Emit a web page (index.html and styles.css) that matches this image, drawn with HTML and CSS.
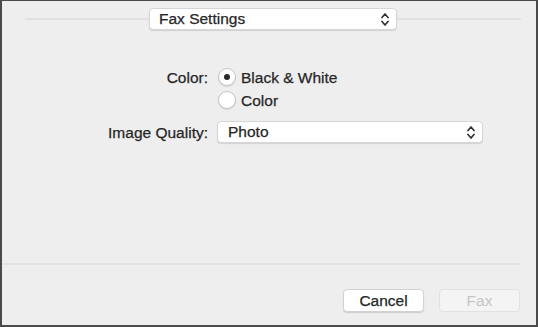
FILE: index.html
```html
<!doctype html>
<html lang="en">
  <head>
    <meta charset="UTF-8" />
    <meta name="viewport" content="width=device-width, initial-scale=1.0" />
    <title>Fax Settings</title>
    <link rel="stylesheet" href="styles.css">
  </head>
  <body>
    <div class="window">
      <!-- Panel picker -->
      <div class="top">
        <div class="rule"></div>
        <div class="popup panel-popup">
          <span>Fax Settings</span>
          <svg class="chevrons" width="8" height="15" viewBox="0 0 8 15">
            <path d="M1 5.5 L4 2 L7 5.5 M1 9.5 L4 13 L7 9.5" fill="none" stroke="#333" stroke-width="1.7" stroke-linecap="round" stroke-linejoin="round" />
          </svg>
        </div>
        <div class="rule"></div>
      </div>

      <!-- Options -->
      <div class="form">
        <div class="label">Color:</div>
        <label class="radio-row">
          <span class="radio checked"></span>
          <span>Black &amp; White</span>
        </label>

        <div class="label"></div>
        <label class="radio-row">
          <span class="radio"></span>
          <span>Color</span>
        </label>

        <div class="label quality">Image Quality:</div>
        <div class="popup quality-popup">
          <span>Photo</span>
          <svg class="chevrons" width="8" height="15" viewBox="0 0 8 15">
            <path d="M1 5.5 L4 2 L7 5.5 M1 9.5 L4 13 L7 9.5" fill="none" stroke="#333" stroke-width="1.7" stroke-linecap="round" stroke-linejoin="round" />
          </svg>
        </div>
      </div>

      <div class="spacer"></div>

      <!-- Footer -->
      <div class="bottom-rule"></div>
      <div class="footer">
        <button class="btn">Cancel</button>
        <button class="btn disabled">Fax</button>
      </div>
    </div>
  </body>
</html>
```

FILE: styles.css
```css
* {
  margin: 0;
  padding: 0;
  box-sizing: border-box;
}

body {
  font-family: "Liberation Sans", Arial, sans-serif;
  font-size: 15.5px;
  color: #262626;
  -webkit-text-stroke: 0.25px currentColor;
  background: #4a4a4a;
}

.window {
  width: 538px;
  height: 327px;
  border: 2px solid #4a4a4a;
  border-top-width: 1.5px;
  background: #eeeeee;
  display: flex;
  flex-direction: column;
}

.top {
  display: flex;
  align-items: center;
  padding: 7px 15px 0 23px;
}

.rule {
  flex: 1;
  height: 2px;
  background: #e0e0e0;
}

.popup {
  display: flex;
  align-items: center;
  justify-content: space-between;
  height: 22px;
  background: #fff;
  border-radius: 4px;
  border: 1px solid #d6d6d6;
  box-shadow: 0 1px 1px rgba(0, 0, 0, 0.12);
  padding: 0 7px 0 9px;
}

.panel-popup {
  width: 248px;
}

.chevrons {
  display: block;
}

.form {
  display: grid;
  grid-template-columns: 206px 266px;
  column-gap: 9px;
  row-gap: 1px;
  margin-top: 36px;
}

.label {
  height: 22px;
  line-height: 23px;
  text-align: right;
}

.radio-row {
  display: flex;
  align-items: center;
  gap: 5px;
  height: 22px;
  padding-left: 1px;
}

.radio-row span:last-child {
  padding-top: 1px;
}

.radio {
  width: 18px;
  height: 18px;
  border-radius: 50%;
  background: #fff;
  border: 1px solid #c4c4c4;
  box-shadow: 0 1px 1px rgba(0, 0, 0, 0.1);
  display: flex;
  align-items: center;
  justify-content: center;
}

.radio.checked::after {
  content: "";
  width: 6px;
  height: 6px;
  border-radius: 50%;
  background: #2a2a2a;
}

.quality,
.quality-popup {
  margin-top: 9px;
}

.quality-popup {
  padding-left: 10px;
}

.spacer {
  flex: 1;
}

.bottom-rule {
  height: 2px;
  background: #e2e2e2;
  margin-right: 15px;
}

.footer {
  display: flex;
  justify-content: flex-end;
  gap: 15px;
  padding: 24px 16px 13px 0;
}

.btn {
  width: 81px;
  height: 23px;
  font-family: inherit;
  font-size: 15.5px;
  color: #262626;
  background: #fff;
  border: 1px solid #d2d2d2;
  border-radius: 4px;
  box-shadow: 0 1px 1px rgba(0, 0, 0, 0.14);
}

.btn.disabled {
  background: #f4f4f4;
  color: #c6c6c6;
  -webkit-text-stroke: 0;
  border-color: #e2e2e2;
  box-shadow: none;
}
```
